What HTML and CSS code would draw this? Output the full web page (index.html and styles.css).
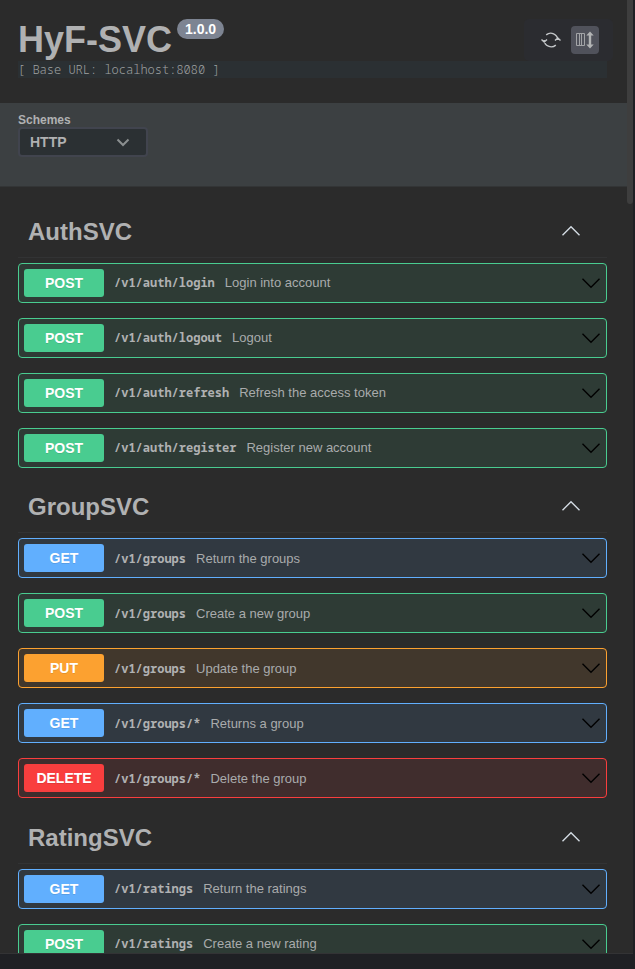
FILE: index.html
```
<!DOCTYPE html>
<html lang="en">
<head>
<meta charset="utf-8">
<title>HyF-SVC</title>
<link rel="stylesheet" href="styles.css">
</head>
<body>
<svg class="defs" width="0" height="0">
  <symbol id="chevron" viewBox="0 0 20 20"><path d="M1.5 5.8 10 14.2 18.500 5.800" fill="none" stroke="currentColor" stroke-width="1.400"/></symbol>
</svg>
<div class="window">
  <main class="page">
    <header class="info">
      <div class="heading"><h1>HyF-SVC</h1><span class="version">1.0.0</span></div>
      <pre class="base">[ Base URL: localhost:8080 ]</pre>
      <div class="tools">
        <svg class="refresh" width="20" height="16" viewBox="0 0 20 16" fill="none" stroke="#c4c7c9" stroke-width="1.4"><path d="M5.200 2.900A7 7 0 0 1 16.800 8V6.200M14.800 13.100A7 7 0 0 1 3.200 8V9.800M.500 7.500 3.200 10 6 7.500M14 8.500 16.800 6 19.500 8.500"/></svg>
        <span class="resize"><svg width="18" height="18" viewBox="0 0 18 18"><path d="M.500 2.500h8v12H.500zM3.500 2.500v12M5.500 2.500v12" fill="none" stroke="#a2a4a7"/><path d="M14 .500 17.700 4.500H15.200V13.500H17.700L14 17.500 10.300 13.500H12.800V4.500H10.300Z" fill="#b2b4b5"/></svg></span>
      </div>
    </header>
    <section class="schemes">
      <label>Schemes</label>
      <div class="select">HTTP<svg width="14" height="9" viewBox="0 0 14 9"><path d="M1.500 1.500 7 7 12.500 1.500" fill="none" stroke="#8b8f90" stroke-width="2"/></svg></div>
    </section>
    <div class="groups">
      <section class="group">
        <h2><span>AuthSVC</span><svg><use href="#chevron"/></svg></h2>
        <div class="op post"><b>POST</b><code>/v1/auth/login</code><span>Login into account</span><svg><use href="#chevron"/></svg></div>
        <div class="op post"><b>POST</b><code>/v1/auth/logout</code><span>Logout</span><svg><use href="#chevron"/></svg></div>
        <div class="op post"><b>POST</b><code>/v1/auth/refresh</code><span>Refresh the access token</span><svg><use href="#chevron"/></svg></div>
        <div class="op post"><b>POST</b><code>/v1/auth/register</code><span>Register new account</span><svg><use href="#chevron"/></svg></div>
      </section>
      <section class="group">
        <h2><span>GroupSVC</span><svg><use href="#chevron"/></svg></h2>
        <div class="op get"><b>GET</b><code>/v1/groups</code><span>Return the groups</span><svg><use href="#chevron"/></svg></div>
        <div class="op post"><b>POST</b><code>/v1/groups</code><span>Create a new group</span><svg><use href="#chevron"/></svg></div>
        <div class="op put"><b>PUT</b><code>/v1/groups</code><span>Update the group</span><svg><use href="#chevron"/></svg></div>
        <div class="op get"><b>GET</b><code>/v1/groups/*</code><span>Returns a group</span><svg><use href="#chevron"/></svg></div>
        <div class="op delete"><b>DELETE</b><code>/v1/groups/*</code><span>Delete the group</span><svg><use href="#chevron"/></svg></div>
      </section>
      <section class="group">
        <h2><span>RatingSVC</span><svg><use href="#chevron"/></svg></h2>
        <div class="op get"><b>GET</b><code>/v1/ratings</code><span>Return the ratings</span><svg><use href="#chevron"/></svg></div>
        <div class="op post"><b>POST</b><code>/v1/ratings</code><span>Create a new rating</span><svg><use href="#chevron"/></svg></div>
      </section>
    </div>
  </main>
  <div class="scrollbar"><div class="thumb"></div></div>
</div>
<footer class="status"></footer>
</body>
</html>
```

FILE: styles.css
```
* { box-sizing: border-box; }
body { margin: 0; height: 969px; overflow: hidden; background: #1f2024; color: #b0b1b2; font-family: "Liberation Sans", Arial, sans-serif; }
.defs { position: absolute; }
.window { display: flex; width: 633px; height: 953px; overflow: hidden; background: #2b2b2b; }
.page { width: 627px; flex: none; }
.scrollbar { width: 6px; }
.thumb { height: 204px; background: #3e3e3e; border-radius: 0 0 3px 3px; }
.status { height: 16px; width: 633px; border-top: 1px solid #333335; background: #1f2024; }

.info { position: relative; height: 103px; padding: 18px 20px 0 18px; }
.heading { display: flex; align-items: flex-start; height: 43px; }
h1 { margin: 0; font-size: 36px; line-height: 43px; color: #b0b1b2; }
.version { margin: 1px 0 0 5px; width: 47px; height: 20px; border-radius: 10px; background: #7d8492; color: #fff; font-size: 14px; font-weight: bold; line-height: 20px; text-align: center; }
.base { margin: 0; height: 17px; background: #2b3033; color: #a0a3a3; font: 300 12px/17px "Noto Sans Mono", "DejaVu Sans Mono", monospace; }
.tools { position: absolute; left: 524px; top: 19px; width: 89px; height: 42px; padding: 7px 14px 0 17px; display: flex; justify-content: space-between; background: #2b2c30; border-radius: 5px; }
.refresh { margin-top: 6px; }
.resize { width: 28px; height: 28px; border-radius: 4px; background: #50525b; display: flex; align-items: center; justify-content: center; }

.schemes { height: 84px; padding: 10px 18px; background: #3c4042; border-bottom: 1px solid #333536; }
.schemes label { display: block; font-size: 12px; font-weight: bold; line-height: 14px; }
.select { width: 130px; height: 30px; padding: 0 16px 0 10px; border: 2px solid #41444e; border-radius: 4px; background: #2b3033; font-size: 14px; font-weight: bold; display: flex; align-items: center; justify-content: space-between; }

.groups { padding: 20.6px 20px 0 18px; }
h2 { display: flex; align-items: center; justify-content: space-between; height: 50.4px; margin: 0 0 5px; padding: 0 26px 3px 10px; border-bottom: 1px solid #323334; font-size: 24px; line-height: 28px; }
h2 span { padding-top: 2px; }
h2 svg { width: 20px; height: 20px; color: #d4dce4; transform: scaleY(-1); }
.op { display: flex; align-items: center; height: 40px; margin-bottom: 15px; padding: 0 5px; border: 1px solid; border-radius: 4px; }
.op b { width: 80px; height: 28px; border-radius: 3px; color: #fff; font-size: 14px; line-height: 28px; text-align: center; text-shadow: 0 1px 0 rgba(0,0,0,.1); }
.op code { margin: 0 10px; padding-top: .3px; font: bold 12px/18px "Noto Sans Mono", "DejaVu Sans Mono", monospace; color: #b0b1b2; }
.op span { flex: 1; font-size: 13px; color: #a9abac; }
.op svg { width: 20px; height: 20px; color: #000; }
.post { border-color: #49cc90; background: #2e3b35; }
.post b { background: #49cc90; }
.get { border-color: #61affe; background: #313941; }
.get b { background: #61affe; }
.put { border-color: #fca130; background: #41372c; }
.put b { background: #fca130; }
.delete { border-color: #f93e3e; background: #402d2d; }
.delete b { background: #f93e3e; }
```
